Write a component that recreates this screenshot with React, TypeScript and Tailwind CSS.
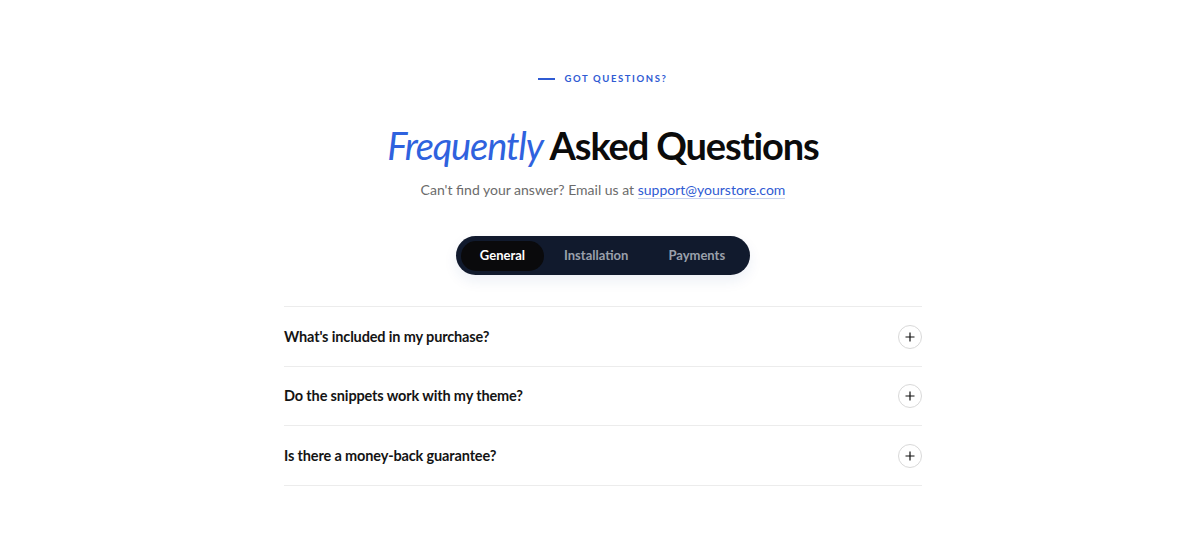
import React, { useState } from "react";

const faqs = [
  "What's included in my purchase?",
  "Do the snippets work with my theme?",
  "Is there a money-back guarantee?",
];

const tabs = ["General", "Installation", "Payments"];

function PlusIcon() {
  return (
    <svg width="10" height="10" viewBox="0 0 10 10" fill="none">
      <path d="M5 0.5v9M0.5 5h9" stroke="#111" strokeWidth="1.2" />
    </svg>
  );
}

export default function App() {
  const [active, setActive] = useState(0);
  return (
    <div
      className="min-h-[555px] w-full bg-white pl-[6px]"
      style={{ fontFamily: "Lato, 'Noto Sans', sans-serif" }}
    >
      <div className="mx-auto flex w-[638px] flex-col items-center pt-[72px]">
        <div className="flex items-center gap-[9px]">
          <span className="block h-[2px] w-[17px] bg-[#2f5bd3]" />
          <span className="text-[9.5px] font-bold tracking-[0.17em] text-[#2f5bd3]">
            GOT QUESTIONS?
          </span>
        </div>
        <h1 className="mt-[40px] text-[38px] leading-[1] font-bold tracking-[-0.03em] text-[#0b0b0b]">
          <span className="font-normal italic text-[#2f62de]">Frequently</span>{" "}
          Asked Questions
        </h1>
        <p className="mt-[15px] text-[14px] text-[#6b6b6b]">
          Can't find your answer? Email us at{" "}
          <a className="border-b border-[#c9d3ee] text-[#2f5bd3]">support@yourstore.com</a>
        </p>
        <div className="mt-[36px] flex h-[39px] items-center rounded-full bg-[#111a2d] px-[5px] shadow-[0_6px_14px_rgba(30,60,140,0.08)]">
          {tabs.map((t, i) => (
            <button
              key={t}
              onClick={() => setActive(i)}
              className={
                i === active
                  ? "h-[30px] rounded-full bg-[#0a0a0c] px-[19px] text-[13px] font-bold text-white"
                  : "h-[30px] rounded-full px-[20px] text-[13px] font-bold text-[#9aa0ab]"
              }
            >
              {t}
            </button>
          ))}
        </div>
        <div className="mt-[31px] w-full border-t border-[#ececec]">
          {faqs.map((q) => (
            <div
              key={q}
              className="flex h-[59.5px] items-center justify-between border-b border-[#ececec]"
            >
              <span className="text-[14.5px] font-bold tracking-[-0.01em] text-[#141414]">{q}</span>
              <span className="flex h-[24px] w-[24px] items-center justify-center rounded-full border border-[#d9d9d9]">
                <PlusIcon />
              </span>
            </div>
          ))}
        </div>
      </div>
    </div>
  );
}
